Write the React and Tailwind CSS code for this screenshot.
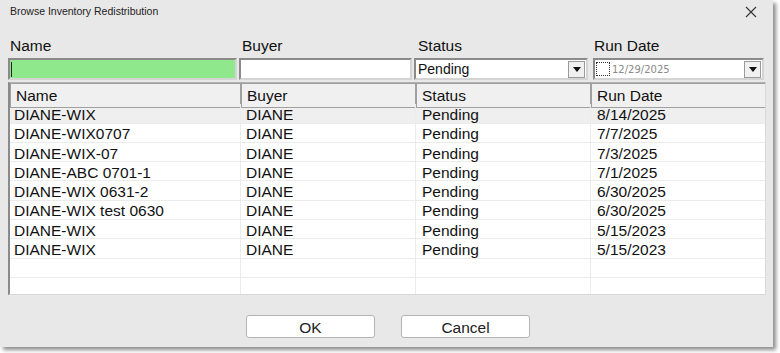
import { useState } from 'react';

const rows = [
  { name: 'DIANE-WIX', buyer: 'DIANE', status: 'Pending', date: '8/14/2025' },
  { name: 'DIANE-WIX0707', buyer: 'DIANE', status: 'Pending', date: '7/7/2025' },
  { name: 'DIANE-WIX-07', buyer: 'DIANE', status: 'Pending', date: '7/3/2025' },
  { name: 'DIANE-ABC 0701-1', buyer: 'DIANE', status: 'Pending', date: '7/1/2025' },
  { name: 'DIANE-WIX 0631-2', buyer: 'DIANE', status: 'Pending', date: '6/30/2025' },
  { name: 'DIANE-WIX test 0630', buyer: 'DIANE', status: 'Pending', date: '6/30/2025' },
  { name: 'DIANE-WIX', buyer: 'DIANE', status: 'Pending', date: '5/15/2023' },
  { name: 'DIANE-WIX', buyer: 'DIANE', status: 'Pending', date: '5/15/2023' },
];

const COLS = 'grid grid-cols-[231px_175px_175px_177px]';

const DropButton = () => (
  <div className="flex h-[17px] w-[17px] items-center justify-center border border-[#9a9a9a] bg-[#f0f0f0]">
    <svg width="8" height="5" viewBox="0 0 8 5">
      <path d="M0 0h8L4 5z" fill="#111" />
    </svg>
  </div>
);

const Inset = ({ className = '', children }) => (
  <div
    className={`flex h-[22px] items-center border-2 border-t-[#8a8a8a] border-l-[#8a8a8a] border-r-[#d4d4d4] border-b-[#d4d4d4] ${className}`}
  >
    {children}
  </div>
);

const App = () => {
  const [selected, setSelected] = useState(0);

  return (
    <div className="h-[353px] w-[780px] bg-white font-['Liberation_Sans',Arial,sans-serif] text-[#111]">
      <div className="flex h-[347px] w-[773px] flex-col bg-[#e8e8e8] shadow-[3px_3px_4px_rgba(0,0,0,0.45)]">
        {/* title bar */}
        <div className="flex h-[23px] items-center justify-between pl-[10px] pr-[16px]">
          <span className="text-[10.5px] text-[#222]">Browse Inventory Redistribution</span>
          <svg width="12" height="12" viewBox="0 0 12 12">
            <path d="M1 1l10 10M11 1L1 11" stroke="#333" strokeWidth="1.1" />
          </svg>
        </div>

        {/* filter labels */}
        <div className={`${COLS} ml-[8px] mt-[13px] h-[20px] items-center text-[15.5px] leading-none`}>
          <span className="pl-[2px]">Name</span>
          <span className="pl-[3px]">Buyer</span>
          <span className="pl-[4px]">Status</span>
          <span className="pl-[5px]">Run Date</span>
        </div>

        {/* filter inputs */}
        <div className={`${COLS} ml-[8px] mt-[2px]`}>
          <Inset className="mr-[2px] bg-[#90e88c] pl-[1px]">
            <div className="h-[15px] w-px bg-[#222]" />
          </Inset>
          <Inset className="mr-[2px] bg-white" />
          <Inset className="mr-[1px] justify-between bg-white pl-[2px] pr-[1px] text-[14px]">
            <span>Pending</span>
            <DropButton />
          </Inset>
          <Inset className="ml-[4px] mr-[2px] justify-between bg-white pl-[1px] pr-[1px]">
            <div className="flex items-center gap-[2px]">
              <div className="h-[14px] w-[14px] border border-dotted border-[#333] bg-white" />
              <span className="font-['DejaVu_Sans',sans-serif] text-[10px] text-[#8a8a8a]">12/29/2025</span>
            </div>
            <DropButton />
          </Inset>
        </div>

        {/* results grid */}
        <div className="ml-[8px] mt-[2px] h-[213px] w-[758px] overflow-hidden border-l-2 border-t border-b border-r border-l-[#8a8a8a] border-t-[#b0b0b0] border-b-[#d8d8d8] border-r-[#d8d8d8] bg-white">
          <div className={`${COLS} h-[21px] text-[15.5px]`}>
            {['Name', 'Buyer', 'Status', 'Run Date'].map((h) => (
              <div
                key={h}
                className="flex items-center border border-[#a0a0a0] bg-[#f0f0f0] pl-[5px]"
              >
                {h}
              </div>
            ))}
          </div>
          {rows.map((r, i) => (
            <div
              key={i}
              onClick={() => setSelected(i)}
              className={`${COLS} h-[19.3px] text-[15.5px] leading-none ${
                selected === i ? 'bg-[#efefef]' : 'bg-white'
              }`}
            >
              <div className="flex items-center border-b border-r border-[#ececec] pl-[4px] pt-[3px]">{r.name}</div>
              <div className="flex items-center border-b border-r border-[#ececec] pl-[5px] pt-[3px]">{r.buyer}</div>
              <div className="flex items-center border-b border-r border-[#ececec] pl-[6px] pt-[3px]">{r.status}</div>
              <div className="flex items-center border-b border-[#ececec] pl-[6px] pt-[3px]">{r.date}</div>
            </div>
          ))}
          {[0, 1].map((i) => (
            <div key={`e${i}`} className={`${COLS} h-[19.3px]`}>
              <div className="border-b border-r border-[#ececec]" />
              <div className="border-b border-r border-[#ececec]" />
              <div className="border-b border-r border-[#ececec]" />
              <div className="border-b border-[#ececec]" />
            </div>
          ))}
        </div>

        {/* buttons */}
        <div className="mt-[20px] flex pl-[246px]">
          <button className="h-[23px] w-[129px] rounded-[3px] border border-[#b4b4b4] bg-white text-[15.5px] text-[#222]">
            OK
          </button>
          <button className="ml-[26px] h-[23px] w-[129px] rounded-[3px] border border-[#b4b4b4] bg-white text-[15.5px] text-[#222]">
            Cancel
          </button>
        </div>
      </div>
    </div>
  );
};

export default App;
